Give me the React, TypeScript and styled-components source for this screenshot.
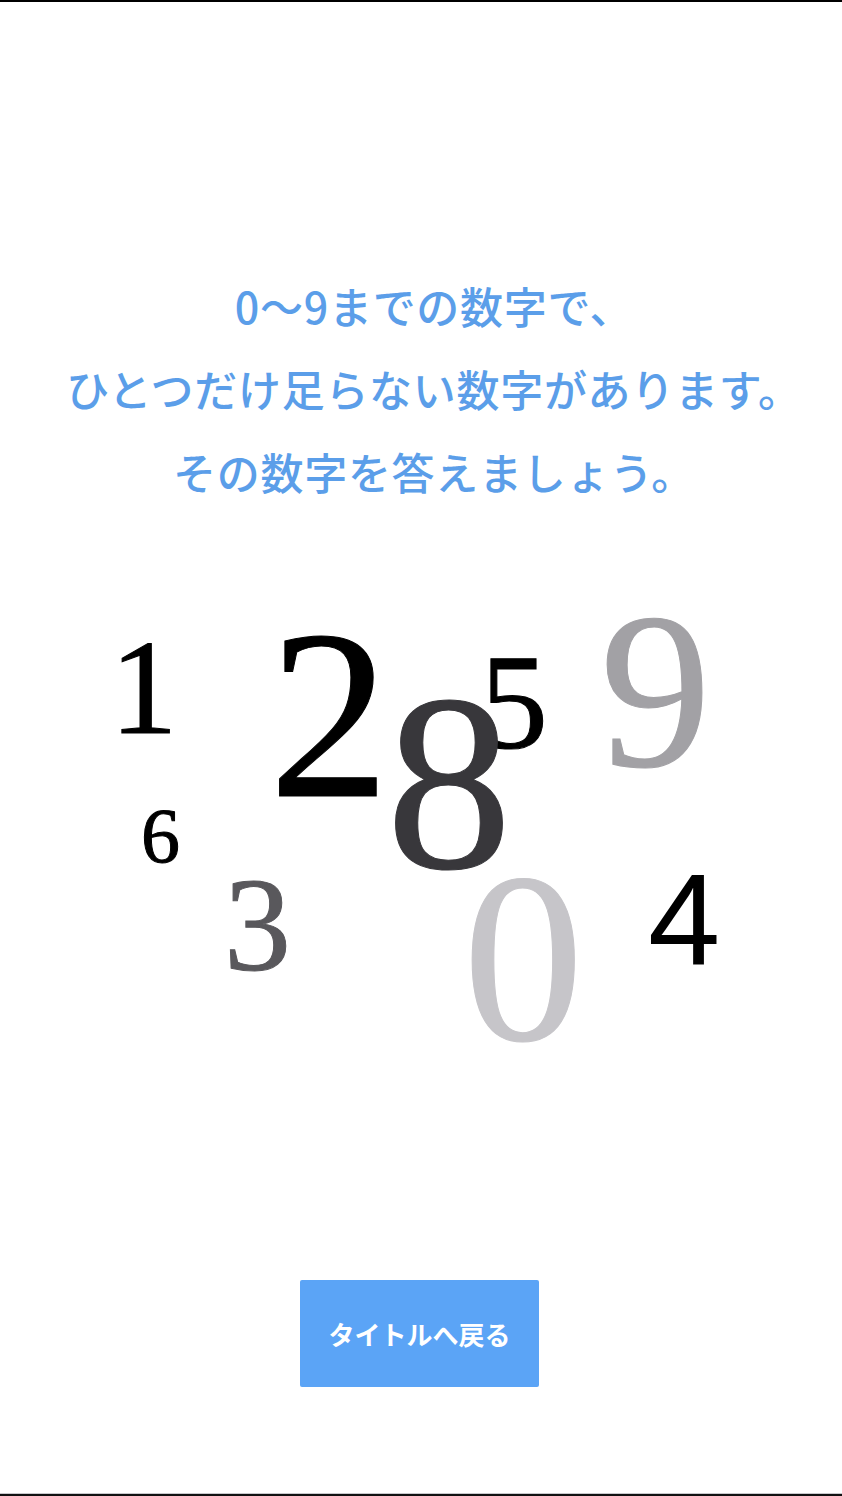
import React, { FC } from "react";
import styled, { createGlobalStyle } from "styled-components";

const GlobalStyle = createGlobalStyle`
  html, body {
    margin: 0;
    padding: 0;
    background: #ffffff;
  }
  * {
    box-sizing: border-box;
  }
`;

const Page = styled.div`
  width: 842px;
  height: 1496px;
  display: flex;
  flex-direction: column;
  align-items: center;
  border-top: 2px solid #000;
  border-bottom: 2px solid #111;
  box-shadow: inset 0 -1px 0 #c8c8cc;
  overflow: hidden;
`;

const Message = styled.div`
  padding-top: 262px;
  padding-left: 26px;
  text-align: center;
  font-family: "Noto Sans CJK JP", "Noto Sans", sans-serif;
  font-weight: 500;
  font-size: 43px;
  line-height: 83px;
  letter-spacing: 0.7px;
  color: #5b9ee9;
`;

const Line = styled.p`
  margin: 0;
  white-space: nowrap;
`;

const Canvas = styled.div`
  position: relative;
  width: 842px;
  height: 480px;
  margin-top: 77px;
`;

const CANVAS_TOP = 591;

type DigitProps = {
  $x: number;
  $baseline: number;
  $size: number;
  $color: string;
  $sans?: boolean;
};

const Digit = styled.span<DigitProps>`
  position: absolute;
  left: ${(p) => p.$x}px;
  top: ${(p) =>
    p.$baseline - (p.$sans ? 0.8465 : 0.8375) * p.$size - CANVAS_TOP}px;
  font-family: ${(p) =>
    p.$sans
      ? `"Liberation Sans", Arial, sans-serif`
      : `"Liberation Serif", "Times New Roman", serif`};
  font-size: ${(p) => p.$size}px;
  line-height: 1;
  color: ${(p) => p.$color};
  -webkit-text-stroke: ${(p) => (p.$sans ? 0 : 1)}px ${(p) => p.$color};
  user-select: none;
`;

const BackButton = styled.button`
  margin-top: 210px;
  margin-right: 3px;
  width: 239px;
  height: 107px;
  border: none;
  border-radius: 2px;
  background: #5ba4f6;
  color: #ffffff;
  font-family: "Noto Sans CJK JP", "Noto Sans", sans-serif;
  font-weight: 700;
  font-size: 26px;
  cursor: pointer;
`;

const digits = [
  { ch: "1", x: 110, baseline: 734, size: 135, color: "#000000" },
  { ch: "2", x: 269, baseline: 797, size: 241, color: "#000000" },
  { ch: "9", x: 600, baseline: 767, size: 222, color: "#a2a1a5" },
  { ch: "5", x: 480, baseline: 749, size: 136, color: "#000000" },
  { ch: "8", x: 386, baseline: 869, size: 252, color: "#38373b" },
  { ch: "6", x: 141, baseline: 863, size: 78, color: "#000000" },
  { ch: "3", x: 224, baseline: 971, size: 134, color: "#59585c" },
  { ch: "0", x: 463, baseline: 1041, size: 241, color: "#c6c5c9" },
  { ch: "4", x: 648, baseline: 965, size: 130, color: "#000000", sans: true },
];

const App: FC = () => {
  return (
    <>
      <GlobalStyle />
      <Page>
        <Message>
          <Line>0〜9までの数字で、</Line>
          <Line>ひとつだけ足らない数字があります。</Line>
          <Line>その数字を答えましょう。</Line>
        </Message>
        <Canvas>
          {digits.map((d, idx) => (
            <Digit
              key={idx}
              $x={d.x}
              $baseline={d.baseline}
              $size={d.size}
              $color={d.color}
              $sans={d.sans}
            >
              {d.ch}
            </Digit>
          ))}
        </Canvas>
        <BackButton>タイトルへ戻る</BackButton>
      </Page>
    </>
  );
};

export default App;
